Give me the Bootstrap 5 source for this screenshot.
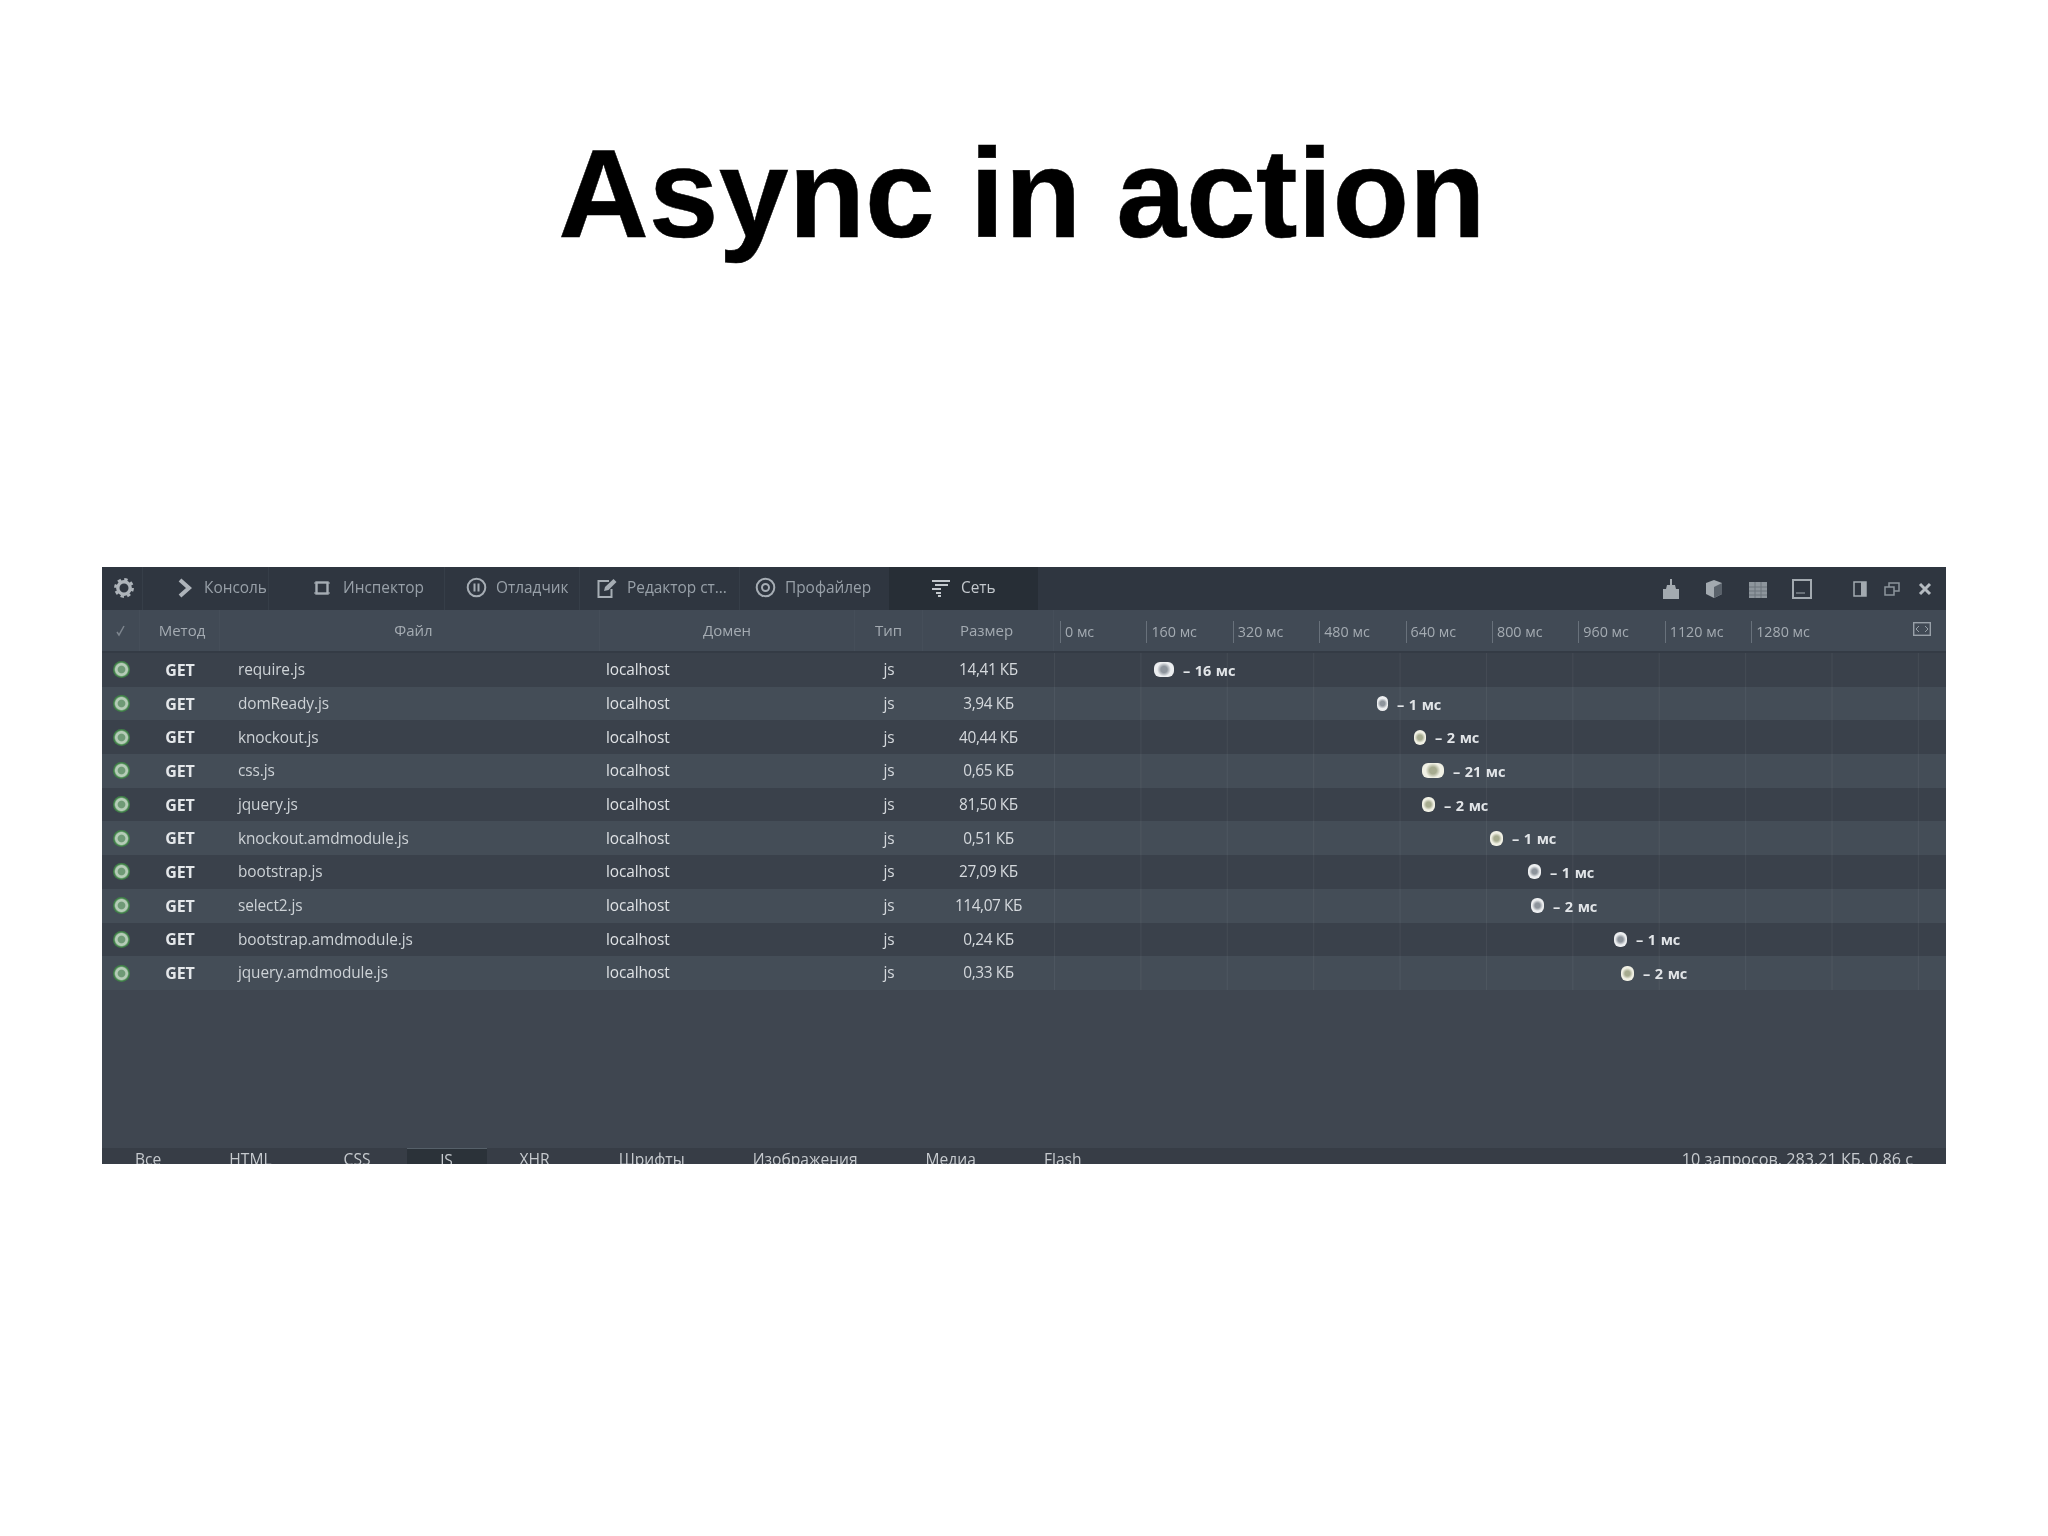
<!DOCTYPE html>
<html lang="ru">
<head>
<meta charset="utf-8">
<title>Async in action</title>
<link rel="stylesheet" href="https://cdn.jsdelivr.net/npm/bootstrap@5.3.0/dist/css/bootstrap.min.css">
<style>
html,body{background:#fff;margin:0}
.slide{width:2048px;height:1536px;overflow:hidden}
.slide-title{font:700 125.5px/1 "Liberation Sans",Arial,sans-serif;color:#000;text-align:center;margin:0;padding:131px 4px 0 0;height:567px;-webkit-text-stroke:.5px #000}
.dt{width:1844px;height:597px;margin-left:102px;background:#3f4650;font-family:"Open Sans","Noto Sans",sans-serif;color:#d5d9dd;filter:blur(.7px);overflow:hidden}
.dt-top{height:43px;background:#2f3640;color:#98a0a8;font-size:15.4px;flex:none}
.dt-tab{height:43px;white-space:nowrap;border-right:1px solid #363e48;flex:none;padding-bottom:2px}
.dt-tab svg{flex:none}
.tab-a{width:41px;justify-content:center;padding-left:3px}
.tab-b{width:126px;padding-left:34px;gap:11px}
.tab-c{width:176px;padding-left:45px;gap:13px}
.tab-d{width:135px;padding-left:21px;gap:9px}
.tab-e{width:160px;padding-left:16px;gap:9px}
.tab-f{width:149px;padding-left:15px;gap:9px;border:0}
.tab-g{width:149px;padding-left:42px;gap:10px;background:#272e36;color:#c3c8cd;border:0}
.top-tools{margin-left:auto;padding-right:14px;color:#9ca3aa}
.dt-grid{display:grid;grid-template-columns:38px 80px 380px 255px 68px 131px 892px;align-items:center}
.dt-head{height:43px;background:#414a55;border-bottom:2px solid #343b45;color:#a4abb2;font-size:15px;flex:none}
.dt-head>div{height:100%;display:flex;align-items:center;justify-content:center;border-right:1px solid #454e59}
.dt-head>.scale{border:0;justify-content:flex-start;position:relative;padding-left:6px}
.hd-meth{padding-left:5px}
.hd-size{padding-right:3px}
.tick{width:86.4px;flex:none;border-left:1px solid #68717b;padding-left:4px;font-size:14.300px;line-height:22px;white-space:nowrap;margin-top:2px}
.scale svg{position:absolute;right:15px;top:12px}
.dt-row{height:33.7px;font-size:15.4px;letter-spacing:-.1px;background:#3a414b}
.dt-row:nth-child(even){background:#444d57}
.dt-row>div{height:100%;display:flex;align-items:center}
.dot{width:17px;height:17px;border-radius:50%;background:radial-gradient(circle,#6f9a76 0 28%,#b5ccb7 36% 50%,#3f8147 62%);}
.meth{font-weight:700;color:#e4e7ea;font-size:16px}
.fname{padding-left:18px;color:#cdd2d6}
.dom{padding-left:6px;color:#dfe2e5}
.sz{letter-spacing:-.4px}
.fall{background-image:linear-gradient(90deg,rgba(255,255,255,.05) 0 1px,transparent 1px);background-size:86.4px 100%;color:#e2e5e8;font-size:14.5px;font-weight:700;white-space:nowrap;word-spacing:1px;padding-top:2px}
.bub{height:15px;border-radius:6px;flex:none;margin-right:9px;margin-top:-2px;background:radial-gradient(circle,#8d949c 0 25%,#eceef0 55%)}
.bub.warm{background:radial-gradient(circle,#a6ab8f 0 25%,#f0f0e4 55%)}
.dt-body{flex:none}
.dt-empty{flex:1 1 auto}
.dt-foot{height:16px;flex:none;background:#373d46;color:#c6cace;font-size:15.6px;overflow:hidden;line-height:23px}
.ft{white-space:nowrap;height:16px}
.ft-js{background:#2b3239;width:80px;text-align:center;border-top:1px solid #566069}
.ft-total{margin-left:auto;padding-right:33px;font-size:16.2px}
</style>
</head>
<body>
<div class="slide">
<h1 class="slide-title">Async in action</h1>
<div class="dt d-flex flex-column">
  <div class="dt-top d-flex align-items-center">
    <div class="dt-tab tab-a d-flex align-items-center">
      <svg width="20" height="20" viewBox="0 0 20 20"><circle cx="10" cy="10" r="6.2" fill="none" stroke="#aeb4ba" stroke-width="3.4"/><circle cx="10" cy="10" r="8.6" fill="none" stroke="#aeb4ba" stroke-width="2.6" stroke-dasharray="3.4 3.35"/></svg>
    </div>
    <div class="dt-tab tab-b d-flex align-items-center">
      <svg width="16" height="20" viewBox="0 0 16 20"><path d="M3 2l9 8-9 8" fill="none" stroke="#aeb4ba" stroke-width="4"/></svg><span>Консоль</span>
    </div>
    <div class="dt-tab tab-c d-flex align-items-center">
      <svg width="16" height="16" viewBox="0 0 16 16"><rect x="2.5" y="2.5" width="11" height="11" fill="none" stroke="#a6adb4" stroke-width="2.4"/><path d="M0 3h2M0 13h2M14 3h2M14 13h2" stroke="#a6adb4"/></svg><span>Инспектор</span>
    </div>
    <div class="dt-tab tab-d d-flex align-items-center">
      <svg width="21" height="21" viewBox="0 0 21 21"><circle cx="10.500" cy="10.500" r="8.800" fill="none" stroke="#a6adb4" stroke-width="2"/><path d="M8.500 6.500v8M12.500 6.500v8" stroke="#a6adb4" stroke-width="2"/></svg><span>Отладчик</span>
    </div>
    <div class="dt-tab tab-e d-flex align-items-center">
      <svg width="22" height="22" viewBox="0 0 22 22"><path d="M13 4H2.500v16h13v-8" fill="none" stroke="#a6adb4" stroke-width="2"/><path d="M8 14l1-4L17.500 2l3 3-8 8z" fill="#a6adb4"/></svg><span>Редактор ст...</span>
    </div>
    <div class="dt-tab tab-f d-flex align-items-center">
      <svg width="21" height="21" viewBox="0 0 21 21"><circle cx="10.500" cy="10.500" r="8.800" fill="none" stroke="#a6adb4" stroke-width="2"/><circle cx="10.500" cy="10.500" r="3.500" fill="none" stroke="#a6adb4" stroke-width="2"/></svg><span>Профайлер</span>
    </div>
    <div class="dt-tab tab-g d-flex align-items-center">
      <svg width="20" height="20" viewBox="0 0 20 20"><path d="M1 3h18M4 7h13M1 11h9M5 15h5M7 18h3" stroke="#c3c8cd" stroke-width="2.200"/></svg><span>Сеть</span>
    </div>
    <div class="top-tools d-flex align-items-center">
      <svg width="18" height="20" viewBox="0 0 18 20" class="me-4"><path d="M8 0h2v6h3l1 4h3v10H1V10h3l1-4h3z" fill="#a3aab0"/></svg>
      <svg width="20" height="20" viewBox="0 0 20 20" class="me-4"><path d="M10 1l8 3v11l-8 4-8-4V4z" fill="#a3aab0"/><path d="M10 8l8-4v11l-8 4z" fill="#5a626b"/></svg>
      <svg width="20" height="20" viewBox="0 0 20 20" class="me-4"><rect x="1" y="3" width="18" height="16" fill="#8d959c"/><path d="M1 8h18M1 12h18M1 16h18M7 3v16M13 3v16" stroke="#6d757d"/></svg>
      <svg width="20" height="20" viewBox="0 0 20 20"><rect x="1" y="1" width="18" height="18" fill="none" stroke="#a3aab0" stroke-width="2"/><path d="M4 14h9" stroke="#a3aab0"/></svg>
      <svg width="14" height="16" viewBox="0 0 14 16" style="margin-left:41px"><rect x="1" y="1" width="12" height="14" fill="none" stroke="#a3aab0" stroke-width="1.500"/><rect x="8" y="1" width="5" height="14" fill="#a3aab0"/></svg>
      <svg width="16" height="16" viewBox="0 0 16 16" style="margin-left:17px"><path d="M1 6h9v8H1zM5 6V2h10v8h-5" fill="none" stroke="#8d959c" stroke-width="1.500"/></svg>
      <svg width="14" height="14" viewBox="0 0 14 14" style="margin-left:18px"><path d="M2 2l10 10M12 2L2 12" stroke="#b5bbc1" stroke-width="3"/></svg>
    </div>
  </div>
  <div class="dt-grid dt-head">
    <div><svg width="12" height="12" viewBox="0 0 12 12"><path d="M2 7l2 3 5-9" fill="none" stroke="#7d858e" stroke-width="1.500"/></svg></div>
    <div class="hd-meth">Метод</div><div class="ps-2">Файл</div><div>Домен</div><div>Тип</div><div class="hd-size">Размер</div>
    <div class="scale">
      <span class="tick">0 мс</span><span class="tick">160 мс</span><span class="tick">320 мс</span><span class="tick">480 мс</span><span class="tick">640 мс</span><span class="tick">800 мс</span><span class="tick">960 мс</span><span class="tick">1120 мс</span><span class="tick">1280 мс</span>
      <svg width="18" height="14" viewBox="0 0 18 14"><rect x=".7" y=".7" width="16.600" height="12.600" fill="none" stroke="#98a0a8" stroke-width="1.400"/><path d="M6 4L3 7l3 3M12 4l3 3-3 3" fill="none" stroke="#98a0a8"/></svg>
    </div>
  </div>
  <div class="dt-body">
    <div class="dt-grid dt-row"><div class="justify-content-center"><span class="dot"></span></div><div class="meth justify-content-center">GET</div><div class="fname">require.js</div><div class="dom">localhost</div><div class="justify-content-center">js</div><div class="sz justify-content-center">14,41 КБ</div><div class="fall"><span class="bub" style="width:20px;margin-left:100px"></span>– 16 мс</div></div>
    <div class="dt-grid dt-row"><div class="justify-content-center"><span class="dot"></span></div><div class="meth justify-content-center">GET</div><div class="fname">domReady.js</div><div class="dom">localhost</div><div class="justify-content-center">js</div><div class="sz justify-content-center">3,94 КБ</div><div class="fall"><span class="bub" style="width:11px;margin-left:323px"></span>– 1 мс</div></div>
    <div class="dt-grid dt-row"><div class="justify-content-center"><span class="dot"></span></div><div class="meth justify-content-center">GET</div><div class="fname">knockout.js</div><div class="dom">localhost</div><div class="justify-content-center">js</div><div class="sz justify-content-center">40,44 КБ</div><div class="fall"><span class="bub warm" style="width:12px;margin-left:360px"></span>– 2 мс</div></div>
    <div class="dt-grid dt-row"><div class="justify-content-center"><span class="dot"></span></div><div class="meth justify-content-center">GET</div><div class="fname">css.js</div><div class="dom">localhost</div><div class="justify-content-center">js</div><div class="sz justify-content-center">0,65 КБ</div><div class="fall"><span class="bub warm" style="width:22px;margin-left:368px"></span>– 21 мс</div></div>
    <div class="dt-grid dt-row"><div class="justify-content-center"><span class="dot"></span></div><div class="meth justify-content-center">GET</div><div class="fname">jquery.js</div><div class="dom">localhost</div><div class="justify-content-center">js</div><div class="sz justify-content-center">81,50 КБ</div><div class="fall"><span class="bub warm" style="width:13px;margin-left:368px"></span>– 2 мс</div></div>
    <div class="dt-grid dt-row"><div class="justify-content-center"><span class="dot"></span></div><div class="meth justify-content-center">GET</div><div class="fname">knockout.amdmodule.js</div><div class="dom">localhost</div><div class="justify-content-center">js</div><div class="sz justify-content-center">0,51 КБ</div><div class="fall"><span class="bub warm" style="width:13px;margin-left:436px"></span>– 1 мс</div></div>
    <div class="dt-grid dt-row"><div class="justify-content-center"><span class="dot"></span></div><div class="meth justify-content-center">GET</div><div class="fname">bootstrap.js</div><div class="dom">localhost</div><div class="justify-content-center">js</div><div class="sz justify-content-center">27,09 КБ</div><div class="fall"><span class="bub" style="width:13px;margin-left:474px"></span>– 1 мс</div></div>
    <div class="dt-grid dt-row"><div class="justify-content-center"><span class="dot"></span></div><div class="meth justify-content-center">GET</div><div class="fname">select2.js</div><div class="dom">localhost</div><div class="justify-content-center">js</div><div class="sz justify-content-center">114,07 КБ</div><div class="fall"><span class="bub" style="width:13px;margin-left:477px"></span>– 2 мс</div></div>
    <div class="dt-grid dt-row"><div class="justify-content-center"><span class="dot"></span></div><div class="meth justify-content-center">GET</div><div class="fname">bootstrap.amdmodule.js</div><div class="dom">localhost</div><div class="justify-content-center">js</div><div class="sz justify-content-center">0,24 КБ</div><div class="fall"><span class="bub" style="width:13px;margin-left:560px"></span>– 1 мс</div></div>
    <div class="dt-grid dt-row"><div class="justify-content-center"><span class="dot"></span></div><div class="meth justify-content-center">GET</div><div class="fname">jquery.amdmodule.js</div><div class="dom">localhost</div><div class="justify-content-center">js</div><div class="sz justify-content-center">0,33 КБ</div><div class="fall"><span class="bub warm" style="width:13px;margin-left:567px"></span>– 2 мс</div></div>
  </div>
  <div class="dt-empty"></div>
  <div class="dt-foot d-flex">
    <span class="ft" style="margin-left:33px">Все</span>
    <span class="ft" style="margin-left:68px">HTML</span>
    <span class="ft" style="margin-left:72px">CSS</span>
    <span class="ft ft-js" style="margin-left:36px">JS</span>
    <span class="ft" style="margin-left:33px">XHR</span>
    <span class="ft" style="margin-left:69px">Шрифты</span>
    <span class="ft" style="margin-left:68px">Изображения</span>
    <span class="ft" style="margin-left:68px">Медиа</span>
    <span class="ft" style="margin-left:68px">Flash</span>
    <span class="ft ft-total">10 запросов, 283,21 КБ, 0,86 с</span>
  </div>
</div>
</div>
<script src="https://cdn.jsdelivr.net/npm/bootstrap@5.3.0/dist/js/bootstrap.bundle.min.js"></script>
</body>
</html>
